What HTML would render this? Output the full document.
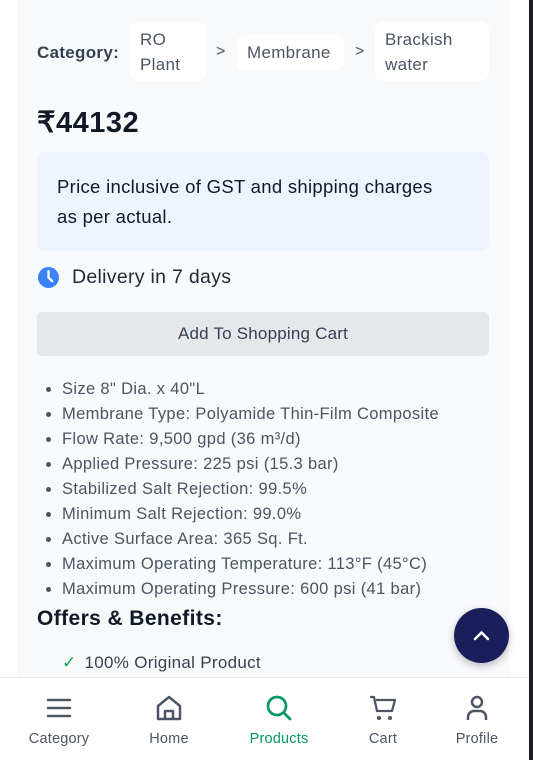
<!DOCTYPE html>
<html><head><style>
*{box-sizing:border-box;margin:0;padding:0}
body{width:533px;height:760px;overflow:hidden;background:#fff;font-family:"Liberation Sans",sans-serif;position:relative;color:#1f2937}
.panel{position:absolute;left:17px;top:0;width:492px;height:760px;background:#f8f9fb}
.sb{position:absolute;left:529px;top:0;width:4px;height:760px;background:#1f2023}
.cat{position:absolute;left:37px;top:43px;font-weight:bold;font-size:17px;color:#374151;letter-spacing:.3px}
.pill{position:absolute;background:#fff;border-radius:8px;font-size:17px;color:#4b5563;line-height:25px;padding:0 10px;letter-spacing:.3px}
.arr{position:absolute;font-size:16px;color:#4b5563}
.price{position:absolute;left:37px;top:105px;font-size:29px;font-weight:bold;color:#111827;letter-spacing:.5px}
.note{position:absolute;left:37px;top:152px;width:452px;height:99px;background:#eef4fe;border-radius:8px;padding:20px 10px 20px 20px;font-size:18.5px;line-height:30px;color:#111827;letter-spacing:.3px;white-space:nowrap}
.del{position:absolute;left:38px;top:266px;font-size:19.5px;color:#1f2937;display:flex;align-items:center;gap:13px;letter-spacing:.3px}
.btn{position:absolute;left:37px;top:312px;width:452px;height:44px;background:#e5e7eb;border-radius:5px;text-align:center;line-height:44px;font-size:17px;color:#374151;letter-spacing:.2px}
ul{position:absolute;left:62px;top:377px;font-size:16.5px;line-height:25px;color:#4b5563;letter-spacing:.35px}
.off{position:absolute;left:37px;top:607px;font-size:21px;font-weight:bold;color:#111827;letter-spacing:.4px}
.chk{position:absolute;left:62px;top:653px;font-size:17px;color:#374151;letter-spacing:.3px}
.chk span{color:#16a34a;margin-right:8px}
.fab{position:absolute;left:454px;top:608px;width:55px;height:55px;border-radius:50%;background:#1a1f5c;box-shadow:0 3px 8px rgba(0,0,0,.25)}
.nav{position:absolute;left:0;top:677px;width:529px;height:83px;background:#fff;border-top:1px solid #e5e7eb}
.it{position:absolute;top:16px;text-align:center;font-size:14.5px;color:#4b5563;width:90px;margin-left:-45px;letter-spacing:.2px}
.it svg{display:block;margin:0 auto 9px}
</style></head><body>
<div class="panel"></div><div class="sb"></div>
<div class="cat">Category:</div>
<div class="pill" style="left:130px;top:22px;height:59px;width:76px;padding-top:5px">RO<br>Plant</div>
<div class="arr" style="left:216px;top:43px">&gt;</div>
<div class="pill" style="left:237px;top:35px;height:35px;width:107px;line-height:35px">Membrane</div>
<div class="arr" style="left:355px;top:43px">&gt;</div>
<div class="pill" style="left:375px;top:22px;height:59px;width:114px;padding-top:5px">Brackish<br>water</div>
<div class="price">₹44132</div>
<div class="note">Price inclusive of GST and shipping charges<br>as per actual.</div>
<div class="del"><svg width="21" height="21" viewBox="0 0 20 20"><circle cx="10" cy="10" r="10" fill="#3b82f6"/><path d="M10 4v6l3.5 3.5" stroke="#fff" stroke-width="2.2" fill="none" stroke-linecap="round"/></svg>Delivery in 7 days</div>
<div class="btn">Add To Shopping Cart</div>
<ul>
<li>Size 8" Dia. x 40"L</li>
<li>Membrane Type: Polyamide Thin-Film Composite</li>
<li>Flow Rate: 9,500 gpd (36 m³/d)</li>
<li>Applied Pressure: 225 psi (15.3 bar)</li>
<li>Stabilized Salt Rejection: 99.5%</li>
<li>Minimum Salt Rejection: 99.0%</li>
<li>Active Surface Area: 365 Sq. Ft.</li>
<li>Maximum Operating Temperature: 113°F (45°C)</li>
<li>Maximum Operating Pressure: 600 psi (41 bar)</li>
</ul>
<div class="off">Offers &amp; Benefits:</div>
<div class="chk"><span>✓</span>100% Original Product</div>
<div class="fab"><svg width="55" height="55" viewBox="0 0 55 55"><path d="M21 31l6.5-6.5L34 31" stroke="#fff" stroke-width="2.5" fill="none" stroke-linecap="round" stroke-linejoin="round"/></svg></div>
<div class="nav">
<div class="it" style="left:59px"><svg width="28" height="28" viewBox="0 0 28 28"><path d="M3 6h22M3 14h22M3 22h22" stroke="#4b5563" stroke-width="2.5" stroke-linecap="round"/></svg>Category</div>
<div class="it" style="left:169px"><svg width="28" height="28" viewBox="0 0 28 28"><path d="M3 25V12L14 3l11 9v13zM10 25v-8h8v8" stroke="#4b5563" stroke-width="2.5" fill="none" stroke-linejoin="round"/></svg>Home</div>
<div class="it" style="left:279px;color:#059669"><svg width="28" height="28" viewBox="0 0 28 28"><circle cx="12" cy="12" r="9" stroke="#059669" stroke-width="2.7" fill="none"/><path d="M19 19l6 6" stroke="#059669" stroke-width="2.7" stroke-linecap="round"/></svg>Products</div>
<div class="it" style="left:383px"><svg width="28" height="28" viewBox="0 0 28 28"><path d="M1 3h4l3 14h15l3-11H7" stroke="#4b5563" stroke-width="2.3" fill="none" stroke-linejoin="round"/><circle cx="10" cy="24" r="2" fill="#4b5563"/><circle cx="21" cy="24" r="2" fill="#4b5563"/></svg>Cart</div>
<div class="it" style="left:477px"><svg width="28" height="28" viewBox="0 0 28 28"><circle cx="14" cy="8" r="5" stroke="#4b5563" stroke-width="2.5" fill="none"/><path d="M5 26v-3a6 6 0 0 1 6-6h6a6 6 0 0 1 6 6v3" stroke="#4b5563" stroke-width="2.5" fill="none"/></svg>Profile</div>
</div>
</body></html>
